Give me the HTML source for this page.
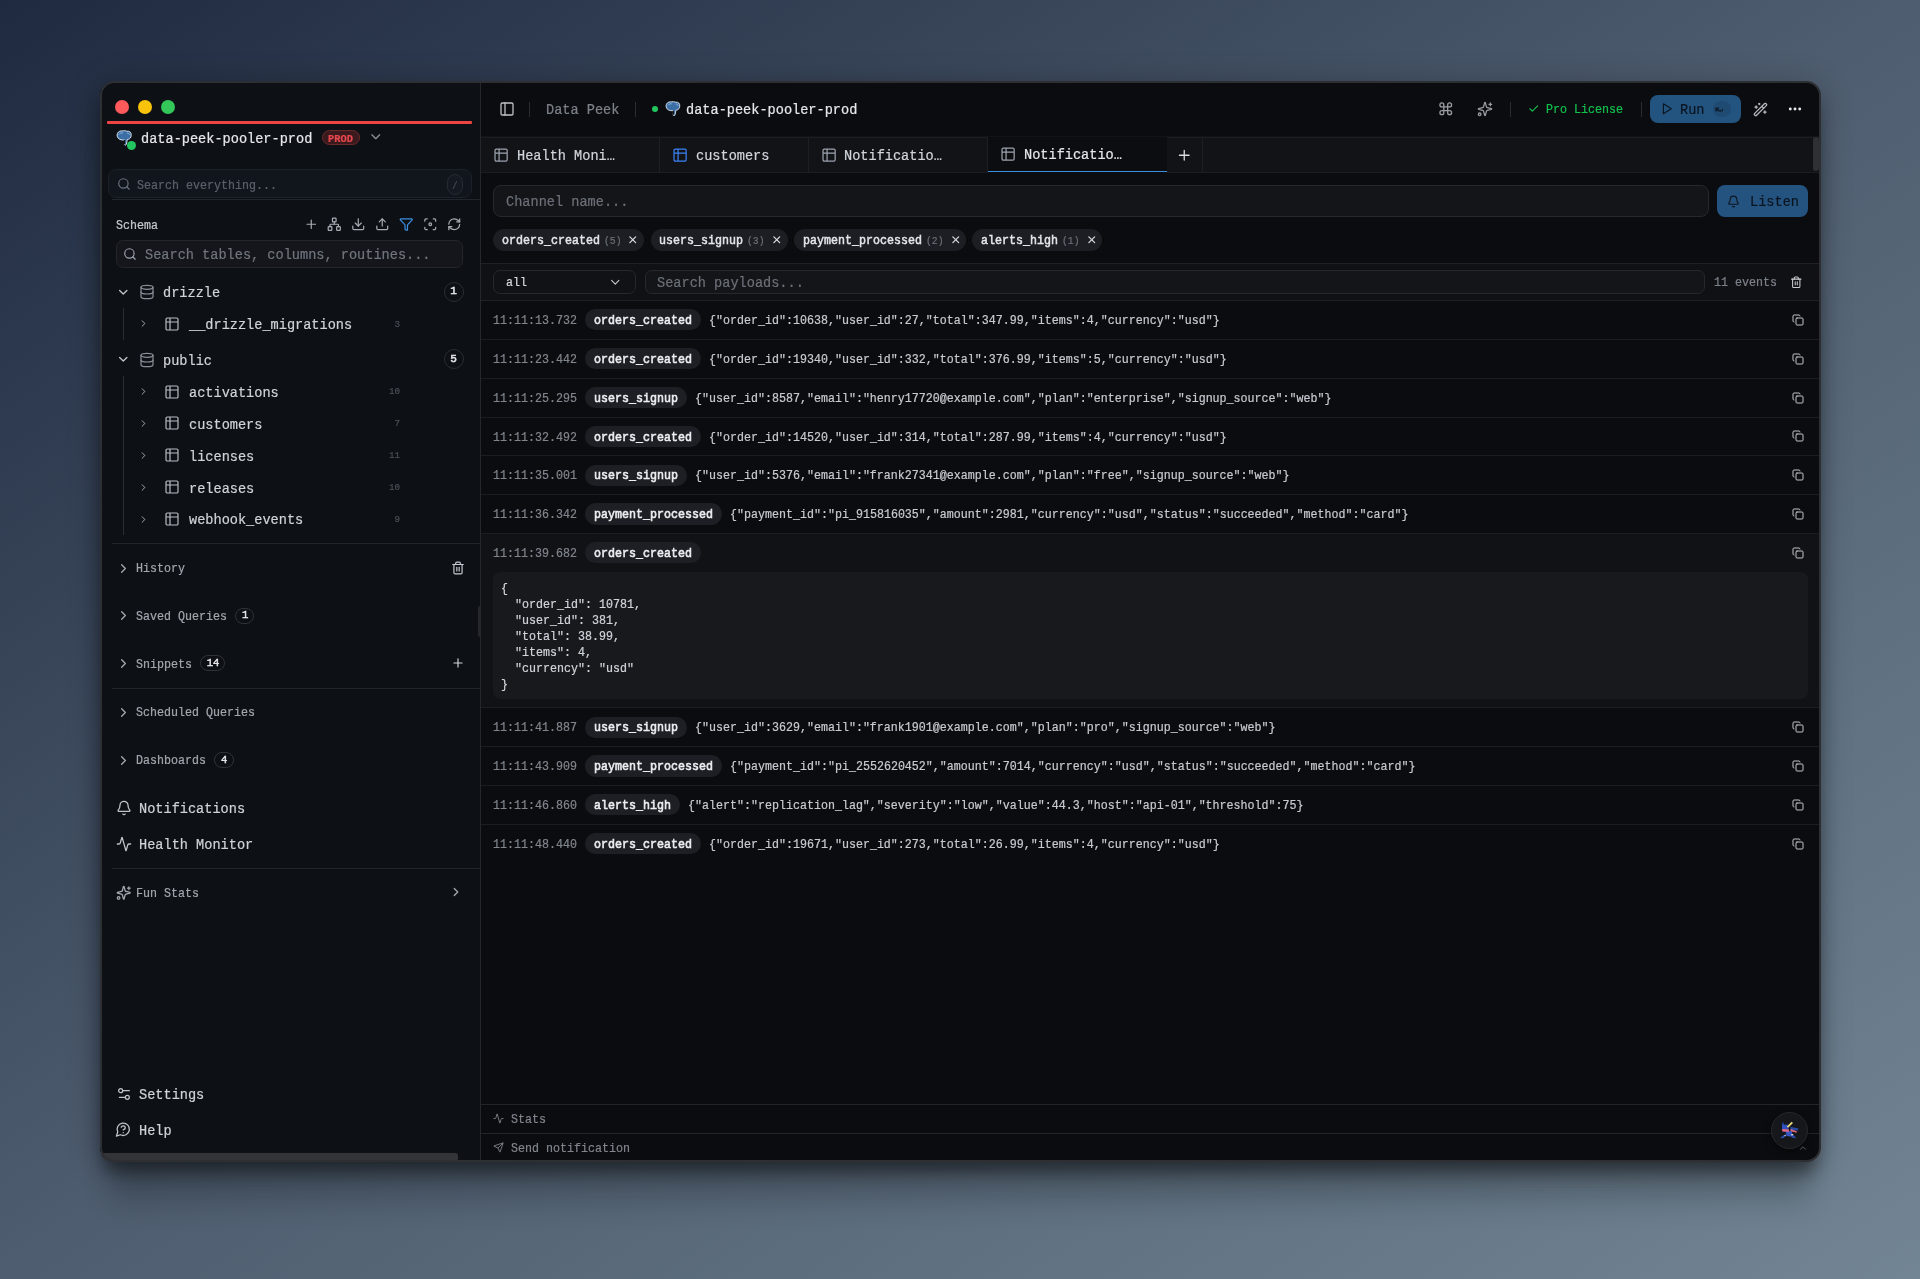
<!DOCTYPE html>
<html><head><meta charset="utf-8"><title>Data Peek</title>
<style>
html,body{margin:0;padding:0;width:1920px;height:1279px;overflow:hidden}
body{position:relative;background:linear-gradient(to bottom right,#1f2a40 0%,#4e5d6f 50%,#728594 100%);font-family:"Liberation Mono",monospace}
.t{position:absolute;white-space:pre;will-change:transform;-webkit-text-stroke:0.2px currentColor;line-height:normal;font-family:"Liberation Mono",monospace}
.b{position:absolute;box-sizing:border-box}
svg{overflow:visible}
</style></head><body>
<div class="b" style="left:100px;top:81.5px;width:1720px;height:1079.5px;border-radius:14px;background:#0b0c0f;box-shadow:0 15px 17px -4px rgba(0,0,0,0.42), 0 51px 28px -10px rgba(0,0,0,0.18), 0 4px 32px 0 rgba(0,0,0,0.28);overflow:hidden"><div class="b" style="left:0;top:0;width:380px;height:1079.5px;background:#0d1116"></div><div class="b" style="left:380px;top:54px;width:1340px;height:37px;background:#121317"></div></div>
<div class="b" style="left:480px;top:82px;width:1px;height:1079px;background:#25272b"></div>
<div class="b" style="left:478px;top:605.6px;width:4px;height:31.3px;border-radius:2px;background:#26272b"></div>
<div class="b" style="left:115.2px;top:99.5px;width:14px;height:14px;border-radius:50%;background:#fe5a5c"></div>
<div class="b" style="left:138.2px;top:99.5px;width:14px;height:14px;border-radius:50%;background:#f8c30a"></div>
<div class="b" style="left:161.2px;top:99.5px;width:14px;height:14px;border-radius:50%;background:#33c659"></div>
<div class="b" style="left:107.4px;top:121.3px;width:364.8px;height:2.6px;background:#ef4444;border-radius:1px"></div>
<svg style="position:absolute;left:115.5px;top:129.5px" width="16" height="16" viewBox="0 0 16 16"><path d="M1.2 6.2 C0.6 2.6 3.2 0.6 6.6 0.9 C8 0.5 9.6 0.6 10.8 1.2 C13.6 0.8 15.6 2.4 15.2 5.6 C15 7.6 14 8.8 12.6 9.2 L11.2 9.6 C11 11.4 10.8 13.2 10.2 14.6 C9.6 15.4 8.6 15.3 8.4 14.4 C8.6 12.8 8.8 11.4 8.6 10 C5.2 10.4 1.8 9.2 1.2 6.2 Z" fill="#3a6ea5" stroke="#e6edf5" stroke-width="0.9" stroke-linejoin="round"/><path d="M3 4.5 C4 3 5.5 2.6 7 3 M11 3.2 C12.4 3 13.4 3.8 13.6 5" stroke="#9cc3ea" stroke-width="0.8" fill="none"/><path d="M8.6 10 C8.8 11.6 8.6 13 8.4 14.4" stroke="#111" stroke-width="1.3" fill="none"/></svg>
<div class="b" style="left:127px;top:141px;width:9px;height:9px;border-radius:50%;background:#22c55e;border:0px"></div>
<div class="t" style="left:141px;top:131.98px;font-size:13.6px;color:#e5e7eb;font-weight:500;transform-origin:0 11.32px;transform:scaleY(1.08);">data-peek-pooler-prod</div>
<div class="b" style="left:321.5px;top:130.4px;width:38.5px;height:14.4px;background:#3a1a1d;border:1px solid #6a292c;border-radius:8px;"></div>
<div class="t" style="left:328.4px;top:132.74px;font-size:10.4px;color:#e5484d;font-weight:700;transform-origin:0 8.66px;transform:scaleY(1.05);">PROD</div>
<svg style="position:absolute;left:368.05px;top:129.45px" width="15.5" height="15.5" viewBox="0 0 24 24" fill="none" stroke="#8f949b" stroke-width="2" stroke-linecap="round" stroke-linejoin="round"><path d="m6 9 6 6 6-6"/></svg>
<div class="b" style="left:108px;top:169px;width:363.5px;height:29px;background:#11151c;border:1px solid #1c2028;border-radius:8px;"></div>
<div class="b" style="left:112px;top:199px;width:368px;height:1px;background:#22262c"></div>
<svg style="position:absolute;left:116.5px;top:177.0px" width="14" height="14" viewBox="0 0 24 24" fill="none" stroke="#6b7280" stroke-width="2" stroke-linecap="round" stroke-linejoin="round"><circle cx="11" cy="11" r="8"/><path d="m21 21-4.3-4.3"/></svg>
<div class="t" style="left:136.5px;top:179.09px;font-size:11.66px;color:#5b616a;font-weight:400;transform-origin:0 9.71px;transform:scaleY(1.08);">Search everything...</div>
<div class="b" style="left:447.1px;top:173.9px;width:16px;height:21px;background:#151922;border:1px solid #262a31;border-radius:8px;"></div>
<div class="t" style="left:452px;top:180.59px;font-size:9.5px;color:#464b52;font-weight:400;transform-origin:0 7.91px;transform:scaleY(1.08);">/</div>
<div class="t" style="left:115.8px;top:218.59px;font-size:11.66px;color:#c7cad0;font-weight:500;transform-origin:0 9.71px;transform:scaleY(1.08);">Schema</div>
<svg style="position:absolute;left:303.55px;top:216.55px" width="14.5" height="14.5" viewBox="0 0 24 24" fill="none" stroke="#a9adb3" stroke-width="2" stroke-linecap="round" stroke-linejoin="round"><path d="M5 12h14"/><path d="M12 5v14"/></svg>
<svg style="position:absolute;left:327.25px;top:216.55px" width="14.5" height="14.5" viewBox="0 0 24 24" fill="none" stroke="#a9adb3" stroke-width="2" stroke-linecap="round" stroke-linejoin="round"><rect x="16" y="16" width="6" height="6" rx="1"/><rect x="2" y="16" width="6" height="6" rx="1"/><rect x="9" y="2" width="6" height="6" rx="1"/><path d="M5 16v-3a1 1 0 0 1 1-1h12a1 1 0 0 1 1 1v3"/><path d="M12 12V8"/></svg>
<svg style="position:absolute;left:351.05px;top:216.55px" width="14.5" height="14.5" viewBox="0 0 24 24" fill="none" stroke="#a9adb3" stroke-width="2" stroke-linecap="round" stroke-linejoin="round"><path d="M21 15v4a2 2 0 0 1-2 2H5a2 2 0 0 1-2-2v-4"/><path d="M7 10l5 5 5-5"/><path d="M12 15V3"/></svg>
<svg style="position:absolute;left:374.75px;top:216.55px" width="14.5" height="14.5" viewBox="0 0 24 24" fill="none" stroke="#a9adb3" stroke-width="2" stroke-linecap="round" stroke-linejoin="round"><path d="M21 15v4a2 2 0 0 1-2 2H5a2 2 0 0 1-2-2v-4"/><path d="M17 8l-5-5-5 5"/><path d="M12 3v12"/></svg>
<svg style="position:absolute;left:399.15px;top:216.55px" width="14.5" height="14.5" viewBox="0 0 24 24" fill="none" stroke="#3d8fe0" stroke-width="2" stroke-linecap="round" stroke-linejoin="round"><path d="M10 20a1 1 0 0 0 .553.895l2 1A1 1 0 0 0 14 21v-7a2 2 0 0 1 .517-1.341L21.74 4.67A1 1 0 0 0 21 3H3a1 1 0 0 0-.742 1.67l7.225 7.989A2 2 0 0 1 10 14z"/></svg>
<svg style="position:absolute;left:422.85px;top:216.55px" width="14.5" height="14.5" viewBox="0 0 24 24" fill="none" stroke="#a9adb3" stroke-width="2" stroke-linecap="round" stroke-linejoin="round"><path d="M3 7V5a2 2 0 0 1 2-2h2"/><path d="M17 3h2a2 2 0 0 1 2 2v2"/><path d="M21 17v2a2 2 0 0 1-2 2h-2"/><path d="M7 21H5a2 2 0 0 1-2-2v-2"/><circle cx="12" cy="12" r="2.2"/></svg>
<svg style="position:absolute;left:446.65px;top:216.55px" width="14.5" height="14.5" viewBox="0 0 24 24" fill="none" stroke="#a9adb3" stroke-width="2" stroke-linecap="round" stroke-linejoin="round"><path d="M3 12a9 9 0 0 1 9-9 9.75 9.75 0 0 1 6.74 2.74L21 8"/><path d="M21 3v5h-5"/><path d="M21 12a9 9 0 0 1-9 9 9.75 9.75 0 0 1-6.74-2.74L3 16"/><path d="M8 16H3v5"/></svg>
<div class="b" style="left:115.8px;top:240px;width:347.5px;height:27.5px;background:#14161b;border:1px solid #22252b;border-radius:7px;"></div>
<svg style="position:absolute;left:123.2px;top:247.0px" width="14" height="14" viewBox="0 0 24 24" fill="none" stroke="#9ca3af" stroke-width="2" stroke-linecap="round" stroke-linejoin="round"><circle cx="11" cy="11" r="8"/><path d="m21 21-4.3-4.3"/></svg>
<div class="t" style="left:144.5px;top:247.58px;font-size:13.6px;color:#71767e;font-weight:400;transform-origin:0 11.32px;transform:scaleY(1.08);">Search tables, columns, routines...</div>
<svg style="position:absolute;left:116.45px;top:284.55px" width="14.5" height="14.5" viewBox="0 0 24 24" fill="none" stroke="#c0c4ca" stroke-width="2.2" stroke-linecap="round" stroke-linejoin="round"><path d="m6 9 6 6 6-6"/></svg>
<svg style="position:absolute;left:139.2px;top:283.8px" width="16" height="16" viewBox="0 0 24 24" fill="none" stroke="#8b9098" stroke-width="1.8" stroke-linecap="round" stroke-linejoin="round"><ellipse cx="12" cy="5" rx="9" ry="3"/><path d="M3 5V19A9 3 0 0 0 21 19V5"/><path d="M3 12A9 3 0 0 0 21 12"/></svg>
<div class="t" style="left:163.3px;top:286.28px;font-size:13.6px;color:#d0d3d8;font-weight:400;transform-origin:0 11.32px;transform:scaleY(1.08);">drizzle</div>
<div class="b" style="left:443.5px;top:281.6px;width:20px;height:20px;background:transparent;border:1px solid #2a2d33;border-radius:10px;"></div>
<div class="t" style="left:444px;width:19px;text-align:center;top:284.90px;font-size:11px;color:#e5e7eb;-webkit-text-stroke:0.5px #e5e7eb">1</div>
<div class="b" style="left:123px;top:308px;width:1px;height:31.5px;background:#2a2d33"></div>
<svg style="position:absolute;left:137.7px;top:318.3px" width="11" height="11" viewBox="0 0 24 24" fill="none" stroke="#b0b4bb" stroke-width="2" stroke-linecap="round" stroke-linejoin="round"><path d="m9 18 6-6-6-6"/></svg>
<svg style="position:absolute;left:164.3px;top:315.8px" width="16" height="16" viewBox="0 0 24 24" fill="none" stroke="#b8bcc4" stroke-width="1.8" stroke-linecap="round" stroke-linejoin="round"><path d="M9 3H5a2 2 0 0 0-2 2v4m6-6h10a2 2 0 0 1 2 2v4M9 3v18m0 0h10a2 2 0 0 0 2-2V9M9 21H5a2 2 0 0 1-2-2V9m0 0h18"/></svg>
<div class="t" style="left:188.5px;top:318.28px;font-size:13.6px;color:#d0d3d8;font-weight:400;transform-origin:0 11.32px;transform:scaleY(1.08);">__drizzle_migrations</div>
<div class="t" style="left:360px;width:40px;text-align:right;top:318.50px;font-size:9.2px;color:#4b5058">3</div>
<svg style="position:absolute;left:116.45px;top:352.25px" width="14.5" height="14.5" viewBox="0 0 24 24" fill="none" stroke="#c0c4ca" stroke-width="2.2" stroke-linecap="round" stroke-linejoin="round"><path d="m6 9 6 6 6-6"/></svg>
<svg style="position:absolute;left:139.2px;top:351.5px" width="16" height="16" viewBox="0 0 24 24" fill="none" stroke="#8b9098" stroke-width="1.8" stroke-linecap="round" stroke-linejoin="round"><ellipse cx="12" cy="5" rx="9" ry="3"/><path d="M3 5V19A9 3 0 0 0 21 19V5"/><path d="M3 12A9 3 0 0 0 21 12"/></svg>
<div class="t" style="left:163.3px;top:353.98px;font-size:13.6px;color:#d0d3d8;font-weight:400;transform-origin:0 11.32px;transform:scaleY(1.08);">public</div>
<div class="b" style="left:443.5px;top:349.3px;width:20px;height:20px;background:transparent;border:1px solid #2a2d33;border-radius:10px;"></div>
<div class="t" style="left:444px;width:19px;text-align:center;top:352.60px;font-size:11px;color:#e5e7eb;-webkit-text-stroke:0.5px #e5e7eb">5</div>
<div class="b" style="left:123px;top:376px;width:1px;height:159px;background:#2a2d33"></div>
<svg style="position:absolute;left:137.7px;top:386.1px" width="11" height="11" viewBox="0 0 24 24" fill="none" stroke="#b0b4bb" stroke-width="2" stroke-linecap="round" stroke-linejoin="round"><path d="m9 18 6-6-6-6"/></svg>
<svg style="position:absolute;left:164.3px;top:383.6px" width="16" height="16" viewBox="0 0 24 24" fill="none" stroke="#b8bcc4" stroke-width="1.8" stroke-linecap="round" stroke-linejoin="round"><path d="M9 3H5a2 2 0 0 0-2 2v4m6-6h10a2 2 0 0 1 2 2v4M9 3v18m0 0h10a2 2 0 0 0 2-2V9M9 21H5a2 2 0 0 1-2-2V9m0 0h18"/></svg>
<div class="t" style="left:188.5px;top:386.08px;font-size:13.6px;color:#d0d3d8;font-weight:400;transform-origin:0 11.32px;transform:scaleY(1.08);">activations</div>
<div class="t" style="left:360px;width:40px;text-align:right;top:386.30px;font-size:9.2px;color:#4b5058">10</div>
<svg style="position:absolute;left:137.7px;top:417.95px" width="11" height="11" viewBox="0 0 24 24" fill="none" stroke="#b0b4bb" stroke-width="2" stroke-linecap="round" stroke-linejoin="round"><path d="m9 18 6-6-6-6"/></svg>
<svg style="position:absolute;left:164.3px;top:415.45px" width="16" height="16" viewBox="0 0 24 24" fill="none" stroke="#b8bcc4" stroke-width="1.8" stroke-linecap="round" stroke-linejoin="round"><path d="M9 3H5a2 2 0 0 0-2 2v4m6-6h10a2 2 0 0 1 2 2v4M9 3v18m0 0h10a2 2 0 0 0 2-2V9M9 21H5a2 2 0 0 1-2-2V9m0 0h18"/></svg>
<div class="t" style="left:188.5px;top:417.93px;font-size:13.6px;color:#d0d3d8;font-weight:400;transform-origin:0 11.32px;transform:scaleY(1.08);">customers</div>
<div class="t" style="left:360px;width:40px;text-align:right;top:418.15px;font-size:9.2px;color:#4b5058">7</div>
<svg style="position:absolute;left:137.7px;top:449.8px" width="11" height="11" viewBox="0 0 24 24" fill="none" stroke="#b0b4bb" stroke-width="2" stroke-linecap="round" stroke-linejoin="round"><path d="m9 18 6-6-6-6"/></svg>
<svg style="position:absolute;left:164.3px;top:447.3px" width="16" height="16" viewBox="0 0 24 24" fill="none" stroke="#b8bcc4" stroke-width="1.8" stroke-linecap="round" stroke-linejoin="round"><path d="M9 3H5a2 2 0 0 0-2 2v4m6-6h10a2 2 0 0 1 2 2v4M9 3v18m0 0h10a2 2 0 0 0 2-2V9M9 21H5a2 2 0 0 1-2-2V9m0 0h18"/></svg>
<div class="t" style="left:188.5px;top:449.78px;font-size:13.6px;color:#d0d3d8;font-weight:400;transform-origin:0 11.32px;transform:scaleY(1.08);">licenses</div>
<div class="t" style="left:360px;width:40px;text-align:right;top:450.00px;font-size:9.2px;color:#4b5058">11</div>
<svg style="position:absolute;left:137.7px;top:481.65px" width="11" height="11" viewBox="0 0 24 24" fill="none" stroke="#b0b4bb" stroke-width="2" stroke-linecap="round" stroke-linejoin="round"><path d="m9 18 6-6-6-6"/></svg>
<svg style="position:absolute;left:164.3px;top:479.15px" width="16" height="16" viewBox="0 0 24 24" fill="none" stroke="#b8bcc4" stroke-width="1.8" stroke-linecap="round" stroke-linejoin="round"><path d="M9 3H5a2 2 0 0 0-2 2v4m6-6h10a2 2 0 0 1 2 2v4M9 3v18m0 0h10a2 2 0 0 0 2-2V9M9 21H5a2 2 0 0 1-2-2V9m0 0h18"/></svg>
<div class="t" style="left:188.5px;top:481.63px;font-size:13.6px;color:#d0d3d8;font-weight:400;transform-origin:0 11.32px;transform:scaleY(1.08);">releases</div>
<div class="t" style="left:360px;width:40px;text-align:right;top:481.85px;font-size:9.2px;color:#4b5058">10</div>
<svg style="position:absolute;left:137.7px;top:513.5px" width="11" height="11" viewBox="0 0 24 24" fill="none" stroke="#b0b4bb" stroke-width="2" stroke-linecap="round" stroke-linejoin="round"><path d="m9 18 6-6-6-6"/></svg>
<svg style="position:absolute;left:164.3px;top:511.0px" width="16" height="16" viewBox="0 0 24 24" fill="none" stroke="#b8bcc4" stroke-width="1.8" stroke-linecap="round" stroke-linejoin="round"><path d="M9 3H5a2 2 0 0 0-2 2v4m6-6h10a2 2 0 0 1 2 2v4M9 3v18m0 0h10a2 2 0 0 0 2-2V9M9 21H5a2 2 0 0 1-2-2V9m0 0h18"/></svg>
<div class="t" style="left:188.5px;top:513.48px;font-size:13.6px;color:#d0d3d8;font-weight:400;transform-origin:0 11.32px;transform:scaleY(1.08);">webhook_events</div>
<div class="t" style="left:360px;width:40px;text-align:right;top:513.70px;font-size:9.2px;color:#4b5058">9</div>
<div class="b" style="left:111.5px;top:542.5px;width:368.5px;height:1px;background:#22252a"></div>
<svg style="position:absolute;left:116.0px;top:560.5px" width="15" height="15" viewBox="0 0 24 24" fill="none" stroke="#a6aab1" stroke-width="2.1" stroke-linecap="round" stroke-linejoin="round"><path d="m9 18 6-6-6-6"/></svg>
<div class="t" style="left:135.5px;top:562.39px;font-size:11.66px;color:#a3a7ae;font-weight:500;transform-origin:0 9.71px;transform:scaleY(1.08);">History</div>
<svg style="position:absolute;left:451.2px;top:561.0px" width="14" height="14" viewBox="0 0 24 24" fill="none" stroke="#c8ccd2" stroke-width="2" stroke-linecap="round" stroke-linejoin="round"><path d="M3 6h18"/><path d="M19 6v14c0 1-1 2-2 2H7c-1 0-2-1-2-2V6"/><path d="M8 6V4c0-1 1-2 2-2h4c1 0 2 1 2 2v2"/><path d="M10 11v6"/><path d="M14 11v6"/></svg>
<svg style="position:absolute;left:116.0px;top:608.0px" width="15" height="15" viewBox="0 0 24 24" fill="none" stroke="#a6aab1" stroke-width="2.1" stroke-linecap="round" stroke-linejoin="round"><path d="m9 18 6-6-6-6"/></svg>
<div class="t" style="left:135.5px;top:609.89px;font-size:11.66px;color:#a3a7ae;font-weight:500;transform-origin:0 9.71px;transform:scaleY(1.08);">Saved Queries</div>
<div class="b" style="left:234.5px;top:607.5px;width:19.5px;height:16px;background:transparent;border:1px solid #2f3238;border-radius:9px;"></div>
<div class="t" style="left:234.5px;width:20.5px;text-align:center;top:609.00px;font-size:10.6px;color:#e5e7eb;-webkit-text-stroke:0.45px #e5e7eb">1</div>
<svg style="position:absolute;left:116.0px;top:655.8px" width="15" height="15" viewBox="0 0 24 24" fill="none" stroke="#a6aab1" stroke-width="2.1" stroke-linecap="round" stroke-linejoin="round"><path d="m9 18 6-6-6-6"/></svg>
<div class="t" style="left:135.5px;top:657.69px;font-size:11.66px;color:#a3a7ae;font-weight:500;transform-origin:0 9.71px;transform:scaleY(1.08);">Snippets</div>
<div class="b" style="left:200px;top:655.3px;width:25px;height:16px;background:transparent;border:1px solid #2f3238;border-radius:9px;"></div>
<div class="t" style="left:200px;width:26px;text-align:center;top:656.80px;font-size:10.6px;color:#e5e7eb;-webkit-text-stroke:0.45px #e5e7eb">14</div>
<svg style="position:absolute;left:450.8px;top:656.3px" width="14" height="14" viewBox="0 0 24 24" fill="none" stroke="#d1d5db" stroke-width="2" stroke-linecap="round" stroke-linejoin="round"><path d="M5 12h14"/><path d="M12 5v14"/></svg>
<div class="b" style="left:111.5px;top:687.5px;width:368.5px;height:1px;background:#22252a"></div>
<svg style="position:absolute;left:116.0px;top:704.5px" width="15" height="15" viewBox="0 0 24 24" fill="none" stroke="#a6aab1" stroke-width="2.1" stroke-linecap="round" stroke-linejoin="round"><path d="m9 18 6-6-6-6"/></svg>
<div class="t" style="left:135.5px;top:706.39px;font-size:11.66px;color:#a3a7ae;font-weight:500;transform-origin:0 9.71px;transform:scaleY(1.08);">Scheduled Queries</div>
<svg style="position:absolute;left:116.0px;top:752.5px" width="15" height="15" viewBox="0 0 24 24" fill="none" stroke="#a6aab1" stroke-width="2.1" stroke-linecap="round" stroke-linejoin="round"><path d="m9 18 6-6-6-6"/></svg>
<div class="t" style="left:135.5px;top:754.39px;font-size:11.66px;color:#a3a7ae;font-weight:500;transform-origin:0 9.71px;transform:scaleY(1.08);">Dashboards</div>
<div class="b" style="left:214px;top:752px;width:19.5px;height:16px;background:transparent;border:1px solid #2f3238;border-radius:9px;"></div>
<div class="t" style="left:214px;width:20.5px;text-align:center;top:753.50px;font-size:10.6px;color:#e5e7eb;-webkit-text-stroke:0.45px #e5e7eb">4</div>
<svg style="position:absolute;left:115.6px;top:799.5px" width="16" height="16" viewBox="0 0 24 24" fill="none" stroke="#c0c4ca" stroke-width="1.9" stroke-linecap="round" stroke-linejoin="round"><path d="M10.268 21a2 2 0 0 0 3.464 0"/><path d="M3.262 15.326A1 1 0 0 0 4 17h16a1 1 0 0 0 .74-1.673C19.41 13.956 18 12.499 18 8A6 6 0 0 0 6 8c0 4.499-1.411 5.956-2.738 7.326"/></svg>
<div class="t" style="left:139px;top:801.98px;font-size:13.6px;color:#d0d3d8;font-weight:400;transform-origin:0 11.32px;transform:scaleY(1.08);">Notifications</div>
<svg style="position:absolute;left:115.6px;top:835.6px" width="16" height="16" viewBox="0 0 24 24" fill="none" stroke="#c0c4ca" stroke-width="1.9" stroke-linecap="round" stroke-linejoin="round"><path d="M22 12h-2.48a2 2 0 0 0-1.93 1.46l-2.35 8.36a.25.25 0 0 1-.48 0L9.24 2.18a.25.25 0 0 0-.48 0l-2.35 8.36A2 2 0 0 1 4.49 12H2"/></svg>
<div class="t" style="left:139px;top:837.98px;font-size:13.6px;color:#d0d3d8;font-weight:400;transform-origin:0 11.32px;transform:scaleY(1.08);">Health Monitor</div>
<div class="b" style="left:111.5px;top:867.5px;width:368.5px;height:1px;background:#22252a"></div>
<svg style="position:absolute;left:115.55px;top:884.55px" width="15.5" height="15.5" viewBox="0 0 24 24" fill="none" stroke="#a6aab1" stroke-width="1.9" stroke-linecap="round" stroke-linejoin="round"><path d="M9.937 15.5A2 2 0 0 0 8.5 14.063l-6.135-1.582a.5.5 0 0 1 0-.962L8.5 9.936A2 2 0 0 0 9.937 8.5l1.582-6.135a.5.5 0 0 1 .963 0L14.063 8.5A2 2 0 0 0 15.5 9.937l6.135 1.581a.5.5 0 0 1 0 .964L15.5 14.063a2 2 0 0 0-1.437 1.437l-1.582 6.135a.5.5 0 0 1-.963 0z"/><path d="M20 3v4"/><path d="M22 5h-4"/><circle cx="4" cy="20" r="2"/></svg>
<div class="t" style="left:135.5px;top:886.69px;font-size:11.66px;color:#a3a7ae;font-weight:500;transform-origin:0 9.71px;transform:scaleY(1.08);">Fun Stats</div>
<svg style="position:absolute;left:449.0px;top:885.3px" width="14" height="14" viewBox="0 0 24 24" fill="none" stroke="#a6aab1" stroke-width="2.2" stroke-linecap="round" stroke-linejoin="round"><path d="m9 18 6-6-6-6"/></svg>
<svg style="position:absolute;left:115.6px;top:1085.8px" width="16" height="16" viewBox="0 0 24 24" fill="none" stroke="#c0c4ca" stroke-width="1.9" stroke-linecap="round" stroke-linejoin="round"><path d="M20 7h-9"/><path d="M14 17H5"/><circle cx="17" cy="17" r="3"/><circle cx="7" cy="7" r="3"/></svg>
<div class="t" style="left:139.3px;top:1088.18px;font-size:13.6px;color:#d0d3d8;font-weight:400;transform-origin:0 11.32px;transform:scaleY(1.08);">Settings</div>
<svg style="position:absolute;left:115.05px;top:1121.25px" width="16.5" height="16.5" viewBox="0 0 24 24" fill="none" stroke="#c0c4ca" stroke-width="1.9" stroke-linecap="round" stroke-linejoin="round"><path d="M7.9 20A9 9 0 1 0 4 16.1L2 22Z"/><path d="M9.09 9a3 3 0 0 1 5.83 1c0 2-3 3-3 3"/><path d="M12 17h.01"/></svg>
<div class="t" style="left:139.3px;top:1123.98px;font-size:13.6px;color:#d0d3d8;font-weight:400;transform-origin:0 11.32px;transform:scaleY(1.08);">Help</div>
<div class="b" style="left:101px;top:1153px;width:357px;height:7.5px;background:#333438;border-radius:0 4px 4px 12px"></div>
<svg style="position:absolute;left:498.6px;top:101.0px" width="16" height="16" viewBox="0 0 24 24" fill="none" stroke="#c0c4ca" stroke-width="1.9" stroke-linecap="round" stroke-linejoin="round"><rect width="18" height="18" x="3" y="3" rx="2"/><path d="M9 3v18"/></svg>
<div class="b" style="left:529px;top:102px;width:1px;height:15px;background:#2a2c30"></div>
<div class="t" style="left:546px;top:102.98px;font-size:13.6px;color:#7c828a;font-weight:400;transform-origin:0 11.32px;transform:scaleY(1.08);">Data Peek</div>
<div class="b" style="left:635.3px;top:102px;width:1px;height:15px;background:#2a2c30"></div>
<div class="b" style="left:651.8px;top:106.3px;width:6px;height:6px;border-radius:50%;background:#22c55e"></div>
<svg style="position:absolute;left:664.5px;top:101px" width="15.5" height="15.5" viewBox="0 0 16 16"><path d="M1.2 6.2 C0.6 2.6 3.2 0.6 6.6 0.9 C8 0.5 9.6 0.6 10.8 1.2 C13.6 0.8 15.6 2.4 15.2 5.6 C15 7.6 14 8.8 12.6 9.2 L11.2 9.6 C11 11.4 10.8 13.2 10.2 14.6 C9.6 15.4 8.6 15.3 8.4 14.4 C8.6 12.8 8.8 11.4 8.6 10 C5.2 10.4 1.8 9.2 1.2 6.2 Z" fill="#3a6ea5" stroke="#e6edf5" stroke-width="0.9" stroke-linejoin="round"/><path d="M3 4.5 C4 3 5.5 2.6 7 3 M11 3.2 C12.4 3 13.4 3.8 13.6 5" stroke="#9cc3ea" stroke-width="0.8" fill="none"/><path d="M8.6 10 C8.8 11.6 8.6 13 8.4 14.4" stroke="#111" stroke-width="1.3" fill="none"/></svg>
<div class="t" style="left:686px;top:102.98px;font-size:13.6px;color:#e5e7eb;font-weight:400;transform-origin:0 11.32px;transform:scaleY(1.08);">data-peek-pooler-prod</div>
<svg style="position:absolute;left:1437.55px;top:101.25px" width="15.5" height="15.5" viewBox="0 0 24 24" fill="none" stroke="#9a9ea4" stroke-width="2" stroke-linecap="round" stroke-linejoin="round"><path d="M15 6v12a3 3 0 1 0 3-3H6a3 3 0 1 0 3 3V6a3 3 0 1 0-3 3h12a3 3 0 1 0-3-3"/></svg>
<svg style="position:absolute;left:1477.3px;top:100.6px" width="16" height="16" viewBox="0 0 24 24" fill="none" stroke="#9a9ea4" stroke-width="1.9" stroke-linecap="round" stroke-linejoin="round"><path d="M9.937 15.5A2 2 0 0 0 8.5 14.063l-6.135-1.582a.5.5 0 0 1 0-.962L8.5 9.936A2 2 0 0 0 9.937 8.5l1.582-6.135a.5.5 0 0 1 .963 0L14.063 8.5A2 2 0 0 0 15.5 9.937l6.135 1.581a.5.5 0 0 1 0 .964L15.5 14.063a2 2 0 0 0-1.437 1.437l-1.582 6.135a.5.5 0 0 1-.963 0z"/><path d="M20 3v4"/><path d="M22 5h-4"/><circle cx="4" cy="20" r="2"/></svg>
<div class="b" style="left:1510px;top:102px;width:1px;height:15px;background:#2a2c30"></div>
<svg style="position:absolute;left:1528.35px;top:102.75px" width="11.5" height="11.5" viewBox="0 0 24 24" fill="none" stroke="#12c04f" stroke-width="2.4" stroke-linecap="round" stroke-linejoin="round"><path d="M20 6 9 17l-5-5"/></svg>
<div class="t" style="left:1546px;top:103.09px;font-size:11.66px;color:#12c04f;font-weight:500;transform-origin:0 9.71px;transform:scaleY(1.08);">Pro License</div>
<div class="b" style="left:1641px;top:102px;width:1px;height:15px;background:#2a2c30"></div>
<div class="b" style="left:1650px;top:95px;width:90.5px;height:27.7px;background:#23537f;border-radius:8px;"></div>
<svg style="position:absolute;left:1660.25px;top:102.25px" width="13.5" height="13.5" viewBox="0 0 24 24" fill="none" stroke="#0b1520" stroke-width="2" stroke-linecap="round" stroke-linejoin="round"><path d="M6 3l14 9-14 9V3z"/></svg>
<div class="t" style="left:1680.4px;top:102.58px;font-size:13.6px;color:#0b1520;font-weight:500;transform-origin:0 11.32px;transform:scaleY(1.08);">Run</div>
<div class="b" style="left:1712.7px;top:100.9px;width:18px;height:16.6px;background:#1f4a72;border-radius:9px;"></div>
<div class="t" style="left:1714.8px;top:105.84px;font-size:6.8px;color:#0b1520;font-weight:400;transform-origin:0 5.66px;transform:scaleY(1.08);">⌘↵</div>
<svg style="position:absolute;left:1752.5px;top:101.5px" width="15" height="15" viewBox="0 0 24 24" fill="none" stroke="#b8bcc4" stroke-width="2" stroke-linecap="round" stroke-linejoin="round"><path d="m21.64 3.64-1.28-1.28a1.21 1.21 0 0 0-1.72 0L2.36 18.64a1.21 1.21 0 0 0 0 1.72l1.28 1.28a1.2 1.2 0 0 0 1.72 0L21.64 5.36a1.2 1.2 0 0 0 0-1.72"/><path d="m14 7 3 3"/><path d="M5 6v4"/><path d="M19 14v4"/><path d="M10 2v2"/><path d="M7 8H3"/><path d="M21 16h-4"/><path d="M11 3H9"/></svg>

<svg style="position:absolute;left:1784.5px;top:104px" width="20" height="10" viewBox="0 0 20 10"><circle cx="5.3" cy="5" r="1.45" fill="#e8eaed"/><circle cx="10" cy="5" r="1.45" fill="#e8eaed"/><circle cx="14.7" cy="5" r="1.45" fill="#e8eaed"/></svg>
<div class="b" style="left:481px;top:136.5px;width:1339px;height:1px;background:#1c1d21"></div>
<div class="b" style="left:481px;top:172px;width:1339px;height:1px;background:#1c1d21"></div>
<div class="b" style="left:659.2px;top:137px;width:1px;height:35.5px;background:#1e1f23"></div>
<div class="b" style="left:808px;top:137px;width:1px;height:35.5px;background:#1e1f23"></div>
<div class="b" style="left:987.3px;top:137px;width:1px;height:35.5px;background:#1e1f23"></div>
<div class="b" style="left:1166.2px;top:137px;width:1px;height:35.5px;background:#1e1f23"></div>
<div class="b" style="left:987.5px;top:137px;width:179px;height:35.5px;background:#0c0d10"></div>
<div class="b" style="left:1202px;top:137px;width:1px;height:35.5px;background:#1e1f23"></div>
<svg style="position:absolute;left:493.0px;top:147.0px" width="16.2" height="16.2" viewBox="0 0 24 24" fill="none" stroke="#9ca3af" stroke-width="1.8" stroke-linecap="round" stroke-linejoin="round"><path d="M9 3H5a2 2 0 0 0-2 2v4m6-6h10a2 2 0 0 1 2 2v4M9 3v18m0 0h10a2 2 0 0 0 2-2V9M9 21H5a2 2 0 0 1-2-2V9m0 0h18"/></svg>
<div class="t" style="left:516.7px;top:148.88px;font-size:13.6px;color:#d1d5db;font-weight:400;transform-origin:0 11.32px;transform:scaleY(1.08);">Health Moni…</div>
<svg style="position:absolute;left:672.3px;top:147.0px" width="16.2" height="16.2" viewBox="0 0 24 24" fill="none" stroke="#3b82f6" stroke-width="1.8" stroke-linecap="round" stroke-linejoin="round"><path d="M9 3H5a2 2 0 0 0-2 2v4m6-6h10a2 2 0 0 1 2 2v4M9 3v18m0 0h10a2 2 0 0 0 2-2V9M9 21H5a2 2 0 0 1-2-2V9m0 0h18"/></svg>
<div class="t" style="left:696.3px;top:148.88px;font-size:13.6px;color:#d1d5db;font-weight:400;transform-origin:0 11.32px;transform:scaleY(1.08);">customers</div>
<svg style="position:absolute;left:820.8px;top:147.0px" width="16.2" height="16.2" viewBox="0 0 24 24" fill="none" stroke="#9ca3af" stroke-width="1.8" stroke-linecap="round" stroke-linejoin="round"><path d="M9 3H5a2 2 0 0 0-2 2v4m6-6h10a2 2 0 0 1 2 2v4M9 3v18m0 0h10a2 2 0 0 0 2-2V9M9 21H5a2 2 0 0 1-2-2V9m0 0h18"/></svg>
<div class="t" style="left:844.4px;top:148.88px;font-size:13.6px;color:#d1d5db;font-weight:400;transform-origin:0 11.32px;transform:scaleY(1.08);">Notificatio…</div>
<svg style="position:absolute;left:999.8px;top:146.3px" width="16.2" height="16.2" viewBox="0 0 24 24" fill="none" stroke="#9ca3af" stroke-width="1.8" stroke-linecap="round" stroke-linejoin="round"><path d="M9 3H5a2 2 0 0 0-2 2v4m6-6h10a2 2 0 0 1 2 2v4M9 3v18m0 0h10a2 2 0 0 0 2-2V9M9 21H5a2 2 0 0 1-2-2V9m0 0h18"/></svg>
<div class="t" style="left:1023.7px;top:148.18px;font-size:13.6px;color:#e5e7eb;font-weight:400;transform-origin:0 11.32px;transform:scaleY(1.08);">Notificatio…</div>
<div class="b" style="left:987.5px;top:170.6px;width:179px;height:1.8px;background:#3d8fe0"></div>
<svg style="position:absolute;left:1176.15px;top:146.55px" width="16.5" height="16.5" viewBox="0 0 24 24" fill="none" stroke="#d9dce0" stroke-width="1.9" stroke-linecap="round" stroke-linejoin="round"><path d="M5 12h14"/><path d="M12 5v14"/></svg>
<div class="b" style="left:1812.5px;top:137px;width:6.5px;height:34px;border-radius:4px;background:#2e3034"></div>
<div class="b" style="left:493px;top:184.9px;width:1215.5px;height:32px;background:#141519;border:1px solid #26282d;border-radius:8px;"></div>
<div class="t" style="left:505.5px;top:195.38px;font-size:13.6px;color:#6b7078;font-weight:400;transform-origin:0 11.32px;transform:scaleY(1.08);">Channel name...</div>
<div class="b" style="left:1717.4px;top:185.3px;width:91px;height:31.7px;background:#245380;border-radius:8px;"></div>
<svg style="position:absolute;left:1726.7px;top:194.5px" width="13" height="13" viewBox="0 0 24 24" fill="none" stroke="#0b1520" stroke-width="2" stroke-linecap="round" stroke-linejoin="round"><path d="M10.268 21a2 2 0 0 0 3.464 0"/><path d="M3.262 15.326A1 1 0 0 0 4 17h16a1 1 0 0 0 .74-1.673C19.41 13.956 18 12.499 18 8A6 6 0 0 0 6 8c0 4.499-1.411 5.956-2.738 7.326"/></svg>
<div class="t" style="left:1750px;top:194.78px;font-size:13.6px;color:#0b1520;font-weight:400;transform-origin:0 11.32px;transform:scaleY(1.08);">Listen</div>
<div class="b" style="left:493px;top:229.2px;width:151px;height:22.2px;background:#1c1e23;border-radius:11px;"></div>
<div class="t" style="left:501.7px;top:234.49px;font-size:11.66px;color:#e5e7eb;font-weight:400;transform-origin:0 9.71px;transform:scaleY(1.08);-webkit-text-stroke:0.45px #e5e7eb;">orders_created</div>
<div class="t" style="left:603.7px;top:236.12px;font-size:9.7px;color:#6b7078;font-weight:400;transform-origin:0 8.08px;transform:scaleY(1.08);">(5)</div>
<svg style="position:absolute;left:627.45px;top:234.45px" width="11.5" height="11.5" viewBox="0 0 24 24" fill="none" stroke="#d8dbe0" stroke-width="2.7" stroke-linecap="round" stroke-linejoin="round"><path d="M18 6 6 18"/><path d="m6 6 12 12"/></svg>
<div class="b" style="left:650.5px;top:229.2px;width:137.0px;height:22.2px;background:#1c1e23;border-radius:11px;"></div>
<div class="t" style="left:659.2px;top:234.49px;font-size:11.66px;color:#e5e7eb;font-weight:400;transform-origin:0 9.71px;transform:scaleY(1.08);-webkit-text-stroke:0.45px #e5e7eb;">users_signup</div>
<div class="t" style="left:747.2px;top:236.12px;font-size:9.7px;color:#6b7078;font-weight:400;transform-origin:0 8.08px;transform:scaleY(1.08);">(3)</div>
<svg style="position:absolute;left:770.95px;top:234.45px" width="11.5" height="11.5" viewBox="0 0 24 24" fill="none" stroke="#d8dbe0" stroke-width="2.7" stroke-linecap="round" stroke-linejoin="round"><path d="M18 6 6 18"/><path d="m6 6 12 12"/></svg>
<div class="b" style="left:793.8px;top:229.2px;width:172.5px;height:22.2px;background:#1c1e23;border-radius:11px;"></div>
<div class="t" style="left:802.5px;top:234.49px;font-size:11.66px;color:#e5e7eb;font-weight:400;transform-origin:0 9.71px;transform:scaleY(1.08);-webkit-text-stroke:0.45px #e5e7eb;">payment_processed</div>
<div class="t" style="left:925.5px;top:236.12px;font-size:9.7px;color:#6b7078;font-weight:400;transform-origin:0 8.08px;transform:scaleY(1.08);">(2)</div>
<svg style="position:absolute;left:949.75px;top:234.45px" width="11.5" height="11.5" viewBox="0 0 24 24" fill="none" stroke="#d8dbe0" stroke-width="2.7" stroke-linecap="round" stroke-linejoin="round"><path d="M18 6 6 18"/><path d="m6 6 12 12"/></svg>
<div class="b" style="left:972.3px;top:229.2px;width:130.10000000000014px;height:22.2px;background:#1c1e23;border-radius:11px;"></div>
<div class="t" style="left:981.0px;top:234.49px;font-size:11.66px;color:#e5e7eb;font-weight:400;transform-origin:0 9.71px;transform:scaleY(1.08);-webkit-text-stroke:0.45px #e5e7eb;">alerts_high</div>
<div class="t" style="left:1062.0px;top:236.12px;font-size:9.7px;color:#6b7078;font-weight:400;transform-origin:0 8.08px;transform:scaleY(1.08);">(1)</div>
<svg style="position:absolute;left:1085.85px;top:234.45px" width="11.5" height="11.5" viewBox="0 0 24 24" fill="none" stroke="#d8dbe0" stroke-width="2.7" stroke-linecap="round" stroke-linejoin="round"><path d="M18 6 6 18"/><path d="m6 6 12 12"/></svg>
<div class="b" style="left:481px;top:263px;width:1339px;height:37.5px;background:#101115"></div>
<div class="b" style="left:481px;top:263px;width:1339px;height:1px;background:#1e2024"></div>
<div class="b" style="left:493px;top:269.8px;width:142.8px;height:24px;background:#111216;border:1px solid #26282d;border-radius:7px;"></div>
<div class="t" style="left:505.5px;top:276.09px;font-size:11.66px;color:#d8dbdf;font-weight:400;transform-origin:0 9.71px;transform:scaleY(1.08);">all</div>
<svg style="position:absolute;left:608.05px;top:274.75px" width="14.5" height="14.5" viewBox="0 0 24 24" fill="none" stroke="#c0c4ca" stroke-width="2" stroke-linecap="round" stroke-linejoin="round"><path d="m6 9 6 6 6-6"/></svg>
<div class="b" style="left:644.5px;top:269.8px;width:1060.8px;height:24px;background:#141519;border:1px solid #26282d;border-radius:7px;"></div>
<div class="t" style="left:657px;top:276.18px;font-size:13.6px;color:#6b7078;font-weight:400;transform-origin:0 11.32px;transform:scaleY(1.08);">Search payloads...</div>
<div class="t" style="left:1714px;top:276.29px;font-size:11.66px;color:#7c828a;font-weight:400;transform-origin:0 9.71px;transform:scaleY(1.08);">11 events</div>
<svg style="position:absolute;left:1790.45px;top:276.05px" width="12.5" height="12.5" viewBox="0 0 24 24" fill="none" stroke="#c9cdd2" stroke-width="2" stroke-linecap="round" stroke-linejoin="round"><path d="M3 6h18"/><path d="M19 6v14c0 1-1 2-2 2H7c-1 0-2-1-2-2V6"/><path d="M8 6V4c0-1 1-2 2-2h4c1 0 2 1 2 2v2"/><path d="M10 11v6"/><path d="M14 11v6"/></svg>
<div class="b" style="left:481px;top:300.3px;width:1339px;height:1px;background:#1e2024"></div>
<div class="t" style="left:493px;top:314.09px;font-size:11.66px;color:#80858d;font-weight:400;transform-origin:0 9.71px;transform:scaleY(1.08);">11:11:13.732</div>
<div class="b" style="left:585.3px;top:309.2px;width:116.2px;height:21.3px;background:#1d1f24;border-radius:11px;"></div>
<div class="t" style="left:594.3px;top:314.09px;font-size:11.66px;color:#eceef1;font-weight:400;transform-origin:0 9.71px;transform:scaleY(1.08);-webkit-text-stroke:0.55px #eceef1;">orders_created</div>
<div class="t" style="left:709.4px;top:314.09px;font-size:11.66px;color:#c7cbd1;font-weight:400;transform-origin:0 9.71px;transform:scaleY(1.08);">{&quot;order_id&quot;:10638,&quot;user_id&quot;:27,&quot;total&quot;:347.99,&quot;items&quot;:4,&quot;currency&quot;:&quot;usd&quot;}</div>
<svg style="position:absolute;left:1792.3px;top:313.8px" width="12" height="12" viewBox="0 0 24 24" fill="none" stroke="#c0c4ca" stroke-width="2" stroke-linecap="round" stroke-linejoin="round"><rect width="14" height="14" x="8" y="8" rx="2" ry="2"/><path d="M4 16c-1.1 0-2-.9-2-2V4c0-1.1.9-2 2-2h10c1.1 0 2 .9 2 2"/></svg>
<div class="b" style="left:481px;top:338.9px;width:1339px;height:1px;background:#1b1d21"></div>
<div class="t" style="left:493px;top:352.99px;font-size:11.66px;color:#80858d;font-weight:400;transform-origin:0 9.71px;transform:scaleY(1.08);">11:11:23.442</div>
<div class="b" style="left:585.3px;top:348.09999999999997px;width:116.2px;height:21.3px;background:#1d1f24;border-radius:11px;"></div>
<div class="t" style="left:594.3px;top:352.99px;font-size:11.66px;color:#eceef1;font-weight:400;transform-origin:0 9.71px;transform:scaleY(1.08);-webkit-text-stroke:0.55px #eceef1;">orders_created</div>
<div class="t" style="left:709.4px;top:352.99px;font-size:11.66px;color:#c7cbd1;font-weight:400;transform-origin:0 9.71px;transform:scaleY(1.08);">{&quot;order_id&quot;:19340,&quot;user_id&quot;:332,&quot;total&quot;:376.99,&quot;items&quot;:5,&quot;currency&quot;:&quot;usd&quot;}</div>
<svg style="position:absolute;left:1792.3px;top:352.7px" width="12" height="12" viewBox="0 0 24 24" fill="none" stroke="#c0c4ca" stroke-width="2" stroke-linecap="round" stroke-linejoin="round"><rect width="14" height="14" x="8" y="8" rx="2" ry="2"/><path d="M4 16c-1.1 0-2-.9-2-2V4c0-1.1.9-2 2-2h10c1.1 0 2 .9 2 2"/></svg>
<div class="b" style="left:481px;top:377.7px;width:1339px;height:1px;background:#1b1d21"></div>
<div class="t" style="left:493px;top:391.79px;font-size:11.66px;color:#80858d;font-weight:400;transform-origin:0 9.71px;transform:scaleY(1.08);">11:11:25.295</div>
<div class="b" style="left:585.3px;top:386.9px;width:102.2px;height:21.3px;background:#1d1f24;border-radius:11px;"></div>
<div class="t" style="left:594.3px;top:391.79px;font-size:11.66px;color:#eceef1;font-weight:400;transform-origin:0 9.71px;transform:scaleY(1.08);-webkit-text-stroke:0.55px #eceef1;">users_signup</div>
<div class="t" style="left:695.4px;top:391.79px;font-size:11.66px;color:#c7cbd1;font-weight:400;transform-origin:0 9.71px;transform:scaleY(1.08);">{&quot;user_id&quot;:8587,&quot;email&quot;:&quot;henry17720@example.com&quot;,&quot;plan&quot;:&quot;enterprise&quot;,&quot;signup_source&quot;:&quot;web&quot;}</div>
<svg style="position:absolute;left:1792.3px;top:391.5px" width="12" height="12" viewBox="0 0 24 24" fill="none" stroke="#c0c4ca" stroke-width="2" stroke-linecap="round" stroke-linejoin="round"><rect width="14" height="14" x="8" y="8" rx="2" ry="2"/><path d="M4 16c-1.1 0-2-.9-2-2V4c0-1.1.9-2 2-2h10c1.1 0 2 .9 2 2"/></svg>
<div class="b" style="left:481px;top:416.5px;width:1339px;height:1px;background:#1b1d21"></div>
<div class="t" style="left:493px;top:430.59px;font-size:11.66px;color:#80858d;font-weight:400;transform-origin:0 9.71px;transform:scaleY(1.08);">11:11:32.492</div>
<div class="b" style="left:585.3px;top:425.7px;width:116.2px;height:21.3px;background:#1d1f24;border-radius:11px;"></div>
<div class="t" style="left:594.3px;top:430.59px;font-size:11.66px;color:#eceef1;font-weight:400;transform-origin:0 9.71px;transform:scaleY(1.08);-webkit-text-stroke:0.55px #eceef1;">orders_created</div>
<div class="t" style="left:709.4px;top:430.59px;font-size:11.66px;color:#c7cbd1;font-weight:400;transform-origin:0 9.71px;transform:scaleY(1.08);">{&quot;order_id&quot;:14520,&quot;user_id&quot;:314,&quot;total&quot;:287.99,&quot;items&quot;:4,&quot;currency&quot;:&quot;usd&quot;}</div>
<svg style="position:absolute;left:1792.3px;top:430.3px" width="12" height="12" viewBox="0 0 24 24" fill="none" stroke="#c0c4ca" stroke-width="2" stroke-linecap="round" stroke-linejoin="round"><rect width="14" height="14" x="8" y="8" rx="2" ry="2"/><path d="M4 16c-1.1 0-2-.9-2-2V4c0-1.1.9-2 2-2h10c1.1 0 2 .9 2 2"/></svg>
<div class="b" style="left:481px;top:455.3px;width:1339px;height:1px;background:#1b1d21"></div>
<div class="t" style="left:493px;top:469.39px;font-size:11.66px;color:#80858d;font-weight:400;transform-origin:0 9.71px;transform:scaleY(1.08);">11:11:35.001</div>
<div class="b" style="left:585.3px;top:464.5px;width:102.2px;height:21.3px;background:#1d1f24;border-radius:11px;"></div>
<div class="t" style="left:594.3px;top:469.39px;font-size:11.66px;color:#eceef1;font-weight:400;transform-origin:0 9.71px;transform:scaleY(1.08);-webkit-text-stroke:0.55px #eceef1;">users_signup</div>
<div class="t" style="left:695.4px;top:469.39px;font-size:11.66px;color:#c7cbd1;font-weight:400;transform-origin:0 9.71px;transform:scaleY(1.08);">{&quot;user_id&quot;:5376,&quot;email&quot;:&quot;frank27341@example.com&quot;,&quot;plan&quot;:&quot;free&quot;,&quot;signup_source&quot;:&quot;web&quot;}</div>
<svg style="position:absolute;left:1792.3px;top:469.1px" width="12" height="12" viewBox="0 0 24 24" fill="none" stroke="#c0c4ca" stroke-width="2" stroke-linecap="round" stroke-linejoin="round"><rect width="14" height="14" x="8" y="8" rx="2" ry="2"/><path d="M4 16c-1.1 0-2-.9-2-2V4c0-1.1.9-2 2-2h10c1.1 0 2 .9 2 2"/></svg>
<div class="b" style="left:481px;top:494.1px;width:1339px;height:1px;background:#1b1d21"></div>
<div class="t" style="left:493px;top:508.29px;font-size:11.66px;color:#80858d;font-weight:400;transform-origin:0 9.71px;transform:scaleY(1.08);">11:11:36.342</div>
<div class="b" style="left:585.3px;top:503.4px;width:137.2px;height:21.3px;background:#1d1f24;border-radius:11px;"></div>
<div class="t" style="left:594.3px;top:508.29px;font-size:11.66px;color:#eceef1;font-weight:400;transform-origin:0 9.71px;transform:scaleY(1.08);-webkit-text-stroke:0.55px #eceef1;">payment_processed</div>
<div class="t" style="left:730.4px;top:508.29px;font-size:11.66px;color:#c7cbd1;font-weight:400;transform-origin:0 9.71px;transform:scaleY(1.08);">{&quot;payment_id&quot;:&quot;pi_915816035&quot;,&quot;amount&quot;:2981,&quot;currency&quot;:&quot;usd&quot;,&quot;status&quot;:&quot;succeeded&quot;,&quot;method&quot;:&quot;card&quot;}</div>
<svg style="position:absolute;left:1792.3px;top:508.0px" width="12" height="12" viewBox="0 0 24 24" fill="none" stroke="#c0c4ca" stroke-width="2" stroke-linecap="round" stroke-linejoin="round"><rect width="14" height="14" x="8" y="8" rx="2" ry="2"/><path d="M4 16c-1.1 0-2-.9-2-2V4c0-1.1.9-2 2-2h10c1.1 0 2 .9 2 2"/></svg>
<div class="b" style="left:481px;top:533.0px;width:1339px;height:1px;background:#1b1d21"></div>
<div class="b" style="left:481px;top:533.8px;width:1339px;height:173.8px;background:#111216"></div>
<div class="t" style="left:493px;top:546.99px;font-size:11.66px;color:#80858d;font-weight:400;transform-origin:0 9.71px;transform:scaleY(1.08);">11:11:39.682</div>
<div class="b" style="left:585.3px;top:542.1px;width:116.2px;height:21.3px;background:#1d1f24;border-radius:11px;"></div>
<div class="t" style="left:594.3px;top:546.99px;font-size:11.66px;color:#eceef1;font-weight:400;transform-origin:0 9.71px;transform:scaleY(1.08);-webkit-text-stroke:0.55px #eceef1;">orders_created</div>
<svg style="position:absolute;left:1792.3px;top:546.7px" width="12" height="12" viewBox="0 0 24 24" fill="none" stroke="#c0c4ca" stroke-width="2" stroke-linecap="round" stroke-linejoin="round"><rect width="14" height="14" x="8" y="8" rx="2" ry="2"/><path d="M4 16c-1.1 0-2-.9-2-2V4c0-1.1.9-2 2-2h10c1.1 0 2 .9 2 2"/></svg>
<div class="b" style="left:481px;top:707.3px;width:1339px;height:1px;background:#1b1d21"></div>
<div class="t" style="left:493px;top:721.39px;font-size:11.66px;color:#80858d;font-weight:400;transform-origin:0 9.71px;transform:scaleY(1.08);">11:11:41.887</div>
<div class="b" style="left:585.3px;top:716.5px;width:102.2px;height:21.3px;background:#1d1f24;border-radius:11px;"></div>
<div class="t" style="left:594.3px;top:721.39px;font-size:11.66px;color:#eceef1;font-weight:400;transform-origin:0 9.71px;transform:scaleY(1.08);-webkit-text-stroke:0.55px #eceef1;">users_signup</div>
<div class="t" style="left:695.4px;top:721.39px;font-size:11.66px;color:#c7cbd1;font-weight:400;transform-origin:0 9.71px;transform:scaleY(1.08);">{&quot;user_id&quot;:3629,&quot;email&quot;:&quot;frank1901@example.com&quot;,&quot;plan&quot;:&quot;pro&quot;,&quot;signup_source&quot;:&quot;web&quot;}</div>
<svg style="position:absolute;left:1792.3px;top:721.1px" width="12" height="12" viewBox="0 0 24 24" fill="none" stroke="#c0c4ca" stroke-width="2" stroke-linecap="round" stroke-linejoin="round"><rect width="14" height="14" x="8" y="8" rx="2" ry="2"/><path d="M4 16c-1.1 0-2-.9-2-2V4c0-1.1.9-2 2-2h10c1.1 0 2 .9 2 2"/></svg>
<div class="b" style="left:481px;top:746.1px;width:1339px;height:1px;background:#1b1d21"></div>
<div class="t" style="left:493px;top:760.19px;font-size:11.66px;color:#80858d;font-weight:400;transform-origin:0 9.71px;transform:scaleY(1.08);">11:11:43.909</div>
<div class="b" style="left:585.3px;top:755.3px;width:137.2px;height:21.3px;background:#1d1f24;border-radius:11px;"></div>
<div class="t" style="left:594.3px;top:760.19px;font-size:11.66px;color:#eceef1;font-weight:400;transform-origin:0 9.71px;transform:scaleY(1.08);-webkit-text-stroke:0.55px #eceef1;">payment_processed</div>
<div class="t" style="left:730.4px;top:760.19px;font-size:11.66px;color:#c7cbd1;font-weight:400;transform-origin:0 9.71px;transform:scaleY(1.08);">{&quot;payment_id&quot;:&quot;pi_2552620452&quot;,&quot;amount&quot;:7014,&quot;currency&quot;:&quot;usd&quot;,&quot;status&quot;:&quot;succeeded&quot;,&quot;method&quot;:&quot;card&quot;}</div>
<svg style="position:absolute;left:1792.3px;top:759.9px" width="12" height="12" viewBox="0 0 24 24" fill="none" stroke="#c0c4ca" stroke-width="2" stroke-linecap="round" stroke-linejoin="round"><rect width="14" height="14" x="8" y="8" rx="2" ry="2"/><path d="M4 16c-1.1 0-2-.9-2-2V4c0-1.1.9-2 2-2h10c1.1 0 2 .9 2 2"/></svg>
<div class="b" style="left:481px;top:784.9px;width:1339px;height:1px;background:#1b1d21"></div>
<div class="t" style="left:493px;top:798.99px;font-size:11.66px;color:#80858d;font-weight:400;transform-origin:0 9.71px;transform:scaleY(1.08);">11:11:46.860</div>
<div class="b" style="left:585.3px;top:794.1px;width:95.2px;height:21.3px;background:#1d1f24;border-radius:11px;"></div>
<div class="t" style="left:594.3px;top:798.99px;font-size:11.66px;color:#eceef1;font-weight:400;transform-origin:0 9.71px;transform:scaleY(1.08);-webkit-text-stroke:0.55px #eceef1;">alerts_high</div>
<div class="t" style="left:688.4px;top:798.99px;font-size:11.66px;color:#c7cbd1;font-weight:400;transform-origin:0 9.71px;transform:scaleY(1.08);">{&quot;alert&quot;:&quot;replication_lag&quot;,&quot;severity&quot;:&quot;low&quot;,&quot;value&quot;:44.3,&quot;host&quot;:&quot;api-01&quot;,&quot;threshold&quot;:75}</div>
<svg style="position:absolute;left:1792.3px;top:798.7px" width="12" height="12" viewBox="0 0 24 24" fill="none" stroke="#c0c4ca" stroke-width="2" stroke-linecap="round" stroke-linejoin="round"><rect width="14" height="14" x="8" y="8" rx="2" ry="2"/><path d="M4 16c-1.1 0-2-.9-2-2V4c0-1.1.9-2 2-2h10c1.1 0 2 .9 2 2"/></svg>
<div class="b" style="left:481px;top:823.7px;width:1339px;height:1px;background:#1b1d21"></div>
<div class="t" style="left:493px;top:837.89px;font-size:11.66px;color:#80858d;font-weight:400;transform-origin:0 9.71px;transform:scaleY(1.08);">11:11:48.440</div>
<div class="b" style="left:585.3px;top:833.0px;width:116.2px;height:21.3px;background:#1d1f24;border-radius:11px;"></div>
<div class="t" style="left:594.3px;top:837.89px;font-size:11.66px;color:#eceef1;font-weight:400;transform-origin:0 9.71px;transform:scaleY(1.08);-webkit-text-stroke:0.55px #eceef1;">orders_created</div>
<div class="t" style="left:709.4px;top:837.89px;font-size:11.66px;color:#c7cbd1;font-weight:400;transform-origin:0 9.71px;transform:scaleY(1.08);">{&quot;order_id&quot;:19671,&quot;user_id&quot;:273,&quot;total&quot;:26.99,&quot;items&quot;:4,&quot;currency&quot;:&quot;usd&quot;}</div>
<svg style="position:absolute;left:1792.3px;top:837.6px" width="12" height="12" viewBox="0 0 24 24" fill="none" stroke="#c0c4ca" stroke-width="2" stroke-linecap="round" stroke-linejoin="round"><rect width="14" height="14" x="8" y="8" rx="2" ry="2"/><path d="M4 16c-1.1 0-2-.9-2-2V4c0-1.1.9-2 2-2h10c1.1 0 2 .9 2 2"/></svg>
<div class="b" style="left:493px;top:572.2px;width:1315px;height:126.5px;background:#17191d;border-radius:7px;"></div>
<div class="t" style="left:500.9px;top:581.89px;font-size:11.66px;color:#d1d5db;font-weight:400;transform-origin:0 9.71px;transform:scaleY(1.08);">{</div>
<div class="t" style="left:500.9px;top:597.84px;font-size:11.66px;color:#d1d5db;font-weight:400;transform-origin:0 9.71px;transform:scaleY(1.08);">&nbsp;&nbsp;&quot;order_id&quot;:&nbsp;10781,</div>
<div class="t" style="left:500.9px;top:613.79px;font-size:11.66px;color:#d1d5db;font-weight:400;transform-origin:0 9.71px;transform:scaleY(1.08);">&nbsp;&nbsp;&quot;user_id&quot;:&nbsp;381,</div>
<div class="t" style="left:500.9px;top:629.74px;font-size:11.66px;color:#d1d5db;font-weight:400;transform-origin:0 9.71px;transform:scaleY(1.08);">&nbsp;&nbsp;&quot;total&quot;:&nbsp;38.99,</div>
<div class="t" style="left:500.9px;top:645.69px;font-size:11.66px;color:#d1d5db;font-weight:400;transform-origin:0 9.71px;transform:scaleY(1.08);">&nbsp;&nbsp;&quot;items&quot;:&nbsp;4,</div>
<div class="t" style="left:500.9px;top:661.64px;font-size:11.66px;color:#d1d5db;font-weight:400;transform-origin:0 9.71px;transform:scaleY(1.08);">&nbsp;&nbsp;&quot;currency&quot;:&nbsp;&quot;usd&quot;</div>
<div class="t" style="left:500.9px;top:677.59px;font-size:11.66px;color:#d1d5db;font-weight:400;transform-origin:0 9.71px;transform:scaleY(1.08);">}</div>
<div class="b" style="left:481px;top:1103.8px;width:1339px;height:1px;background:#222428"></div>
<svg style="position:absolute;left:493.3px;top:1113.3px" width="11" height="11" viewBox="0 0 24 24" fill="none" stroke="#7c828a" stroke-width="2" stroke-linecap="round" stroke-linejoin="round"><path d="M22 12h-2.48a2 2 0 0 0-1.93 1.46l-2.35 8.36a.25.25 0 0 1-.48 0L9.24 2.18a.25.25 0 0 0-.48 0l-2.35 8.36A2 2 0 0 1 4.49 12H2"/></svg>
<div class="t" style="left:511px;top:1112.89px;font-size:11.66px;color:#80858d;font-weight:400;transform-origin:0 9.71px;transform:scaleY(1.08);">Stats</div>
<div class="b" style="left:481px;top:1132.6px;width:1339px;height:1px;background:#222428"></div>
<svg style="position:absolute;left:493.3px;top:1142.0px" width="11" height="11" viewBox="0 0 24 24" fill="none" stroke="#7c828a" stroke-width="2" stroke-linecap="round" stroke-linejoin="round"><path d="M14.536 21.686a.5.5 0 0 0 .937-.024l6.5-19a.496.496 0 0 0-.635-.635l-19 6.5a.5.5 0 0 0-.024.937l7.93 3.18a2 2 0 0 1 1.112 1.11z"/><path d="m21.854 2.147-10.94 10.939"/></svg>
<div class="t" style="left:511px;top:1141.59px;font-size:11.66px;color:#80858d;font-weight:400;transform-origin:0 9.71px;transform:scaleY(1.08);">Send notification</div>
<div class="b" style="left:1771.2px;top:1112px;width:37px;height:37px;border-radius:50%;background:#15171b;border:1.2px solid #25282c;box-shadow:0 2px 8px rgba(0,0,0,0.45)"></div>
<svg style="position:absolute;left:1778px;top:1120px" width="22" height="20" viewBox="0 0 22 20"><polygon points="4.4,2.6 5.6,2.8 5.8,5.5 4.2,5.5" fill="#2c4fb8"/><polygon points="4,5 9.5,4.5 10.5,8 10,11.5 4.5,11.5 4,8" fill="#3050c0"/><polygon points="12.5,6.7 20.4,8.5 20,10.5 12.5,10" fill="#2a4aa8"/><polygon points="7.5,11 14,11 14.5,16.8 8.5,16" fill="#3556c4"/><polygon points="8,14 6,18 2.4,18.2 3,17 6,15" fill="#2a4aa8"/><polygon points="13,13 17.5,17 18,18.2 14.5,18" fill="#2a4aa8"/><polygon points="4,9 11,9.5 11,11.7 4.5,11.5" fill="#e86a7a"/><polygon points="12.8,9 19,11.5 18.5,12.8 12.5,11" fill="#e86a7a"/><line x1="9.5" y1="7.2" x2="14.3" y2="2.4" stroke="#f0dc78" stroke-width="1.8"/><rect x="13.2" y="14" width="2" height="1.4" fill="#d8d8d8"/><rect x="6.4" y="15" width="1.4" height="1.2" fill="#c8c8c8"/></svg>
<svg style="position:absolute;left:1797.5px;top:1142.5px" width="10" height="10" viewBox="0 0 24 24" fill="none" stroke="#5d6066" stroke-width="2.2" stroke-linecap="round" stroke-linejoin="round"><path d="m18 15-6-6-6 6"/></svg>
<div class="b" style="left:99.5px;top:81.0px;width:1721px;height:1080.5px;border-radius:14.5px;border:2px solid #2e2f33;pointer-events:none"></div>
</body></html>
